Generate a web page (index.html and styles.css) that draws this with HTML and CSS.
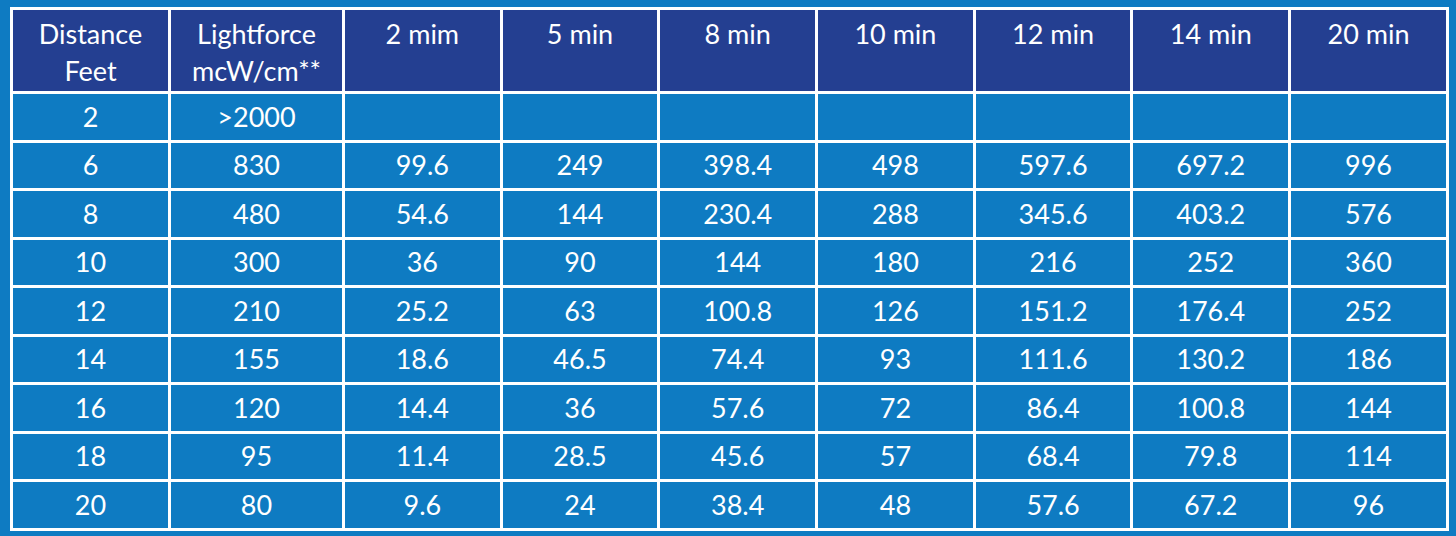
FILE: index.html
```html
<!DOCTYPE html>
<html>
<head>
<meta charset="utf-8">
<link rel="stylesheet" href="styles.css">
</head>
<body>
<div class="page">
<table class="dose">
  <colgroup>
    <col class="c1"><col class="c2"><col class="cn"><col class="cn"><col class="cn"><col class="cn"><col class="cn"><col class="cn"><col class="cn">
  </colgroup>
  <thead>
    <tr><th>Distance<br>Feet</th><th>Lightforce<br>mcW/cm**</th><th>2 mim</th><th>5 min</th><th>8 min</th><th>10 min</th><th>12 min</th><th>14 min</th><th>20 min</th></tr>
  </thead>
  <tbody>
    <tr><td>2</td><td>&gt;2000</td><td></td><td></td><td></td><td></td><td></td><td></td><td></td></tr>
    <tr><td>6</td><td>830</td><td>99.6</td><td>249</td><td>398.4</td><td>498</td><td>597.6</td><td>697.2</td><td>996</td></tr>
    <tr><td>8</td><td>480</td><td>54.6</td><td>144</td><td>230.4</td><td>288</td><td>345.6</td><td>403.2</td><td>576</td></tr>
    <tr><td>10</td><td>300</td><td>36</td><td>90</td><td>144</td><td>180</td><td>216</td><td>252</td><td>360</td></tr>
    <tr><td>12</td><td>210</td><td>25.2</td><td>63</td><td>100.8</td><td>126</td><td>151.2</td><td>176.4</td><td>252</td></tr>
    <tr><td>14</td><td>155</td><td>18.6</td><td>46.5</td><td>74.4</td><td>93</td><td>111.6</td><td>130.2</td><td>186</td></tr>
    <tr><td>16</td><td>120</td><td>14.4</td><td>36</td><td>57.6</td><td>72</td><td>86.4</td><td>100.8</td><td>144</td></tr>
    <tr><td>18</td><td>95</td><td>11.4</td><td>28.5</td><td>45.6</td><td>57</td><td>68.4</td><td>79.8</td><td>114</td></tr>
    <tr><td>20</td><td>80</td><td>9.6</td><td>24</td><td>38.4</td><td>48</td><td>57.6</td><td>67.2</td><td>96</td></tr>
  </tbody>
</table>
</div>
</body>
</html>
```
FILE: styles.css
```css
html, body {
  margin: 0;
  padding: 0;
  background: #0e7bc2;
}
.page {
  width: 1456px;
  height: 536px;
  padding: 7px 0 0 10px;
  box-sizing: border-box;
  background: #0e7bc2;
}
.dose {
  border-collapse: collapse;
  table-layout: fixed;
  width: 1436px;
  font-family: Lato, "Open Sans", sans-serif;
  font-size: 27px;
  color: #ffffff;
}
.c1 { width: 158px; }
.c2 { width: 174px; }
.cn { width: 157.7px; }
.dose th, .dose td {
  border: 3px solid #ffffff;
  text-align: center;
  padding: 0;
  font-weight: normal;
}
.dose th {
  background: #243f91;
  height: 84px;
  vertical-align: top;
  line-height: 37px;
  padding-top: 5px;
  box-sizing: border-box;
}
.dose td {
  height: 48.5px;
  vertical-align: middle;
  line-height: 30px;
  box-sizing: border-box;
}
```
